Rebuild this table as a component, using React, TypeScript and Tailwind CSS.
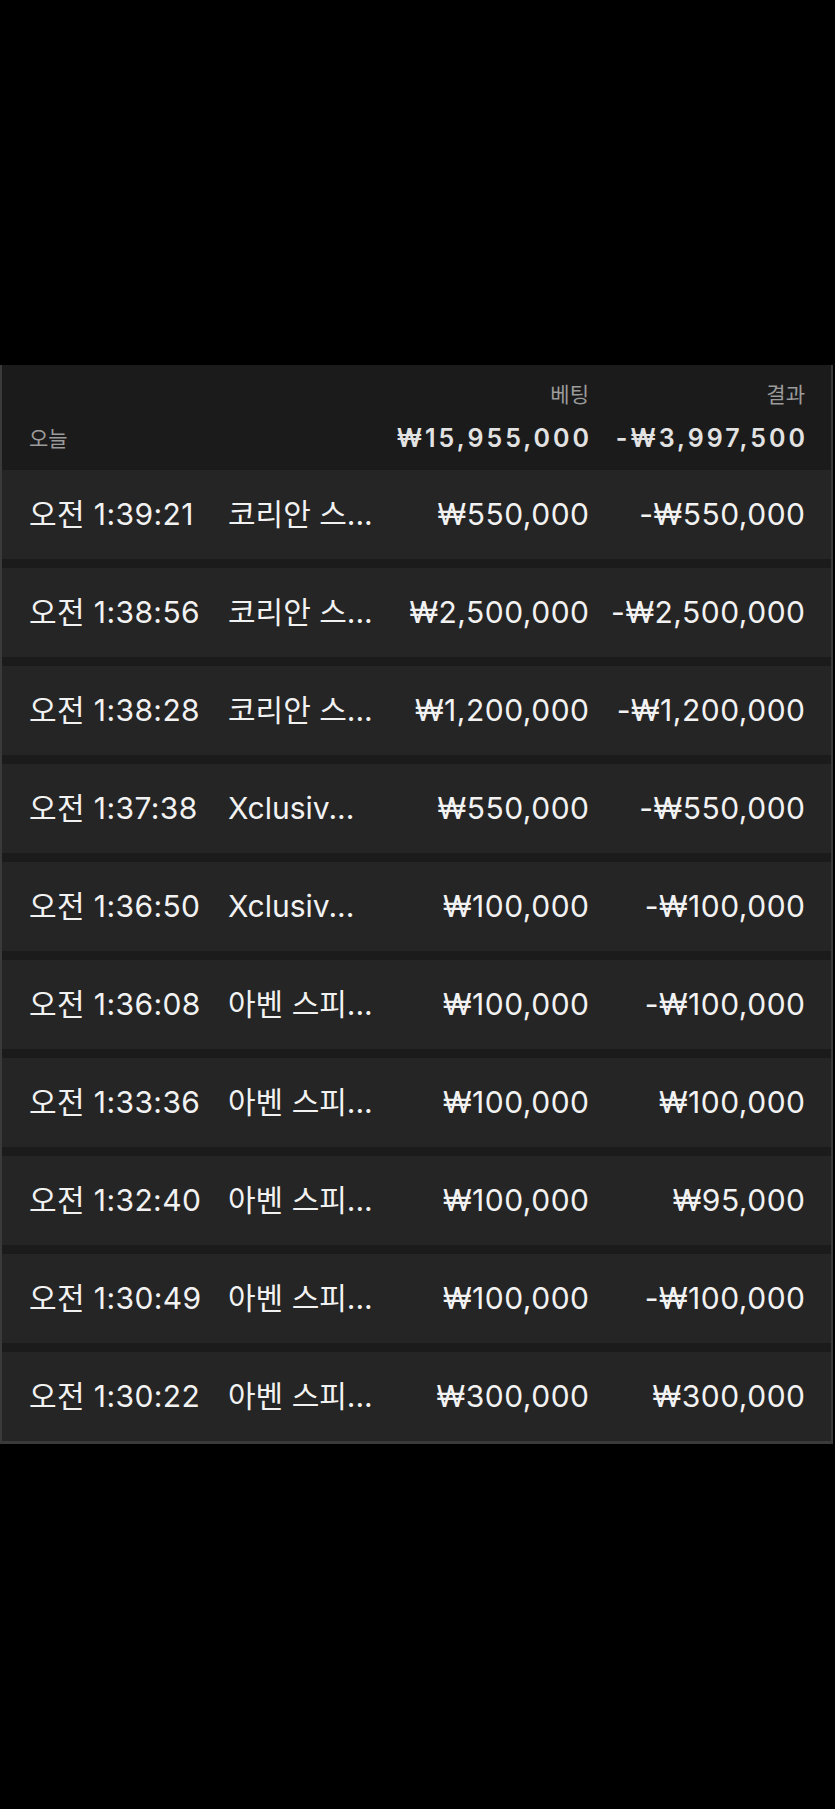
const rows = [
  { time: '오전 1:39:21', game: '코리안 스...', bet: '₩550,000', result: '-₩550,000' },
  { time: '오전 1:38:56', game: '코리안 스...', bet: '₩2,500,000', result: '-₩2,500,000' },
  { time: '오전 1:38:28', game: '코리안 스...', bet: '₩1,200,000', result: '-₩1,200,000' },
  { time: '오전 1:37:38', game: 'Xclusiv...', bet: '₩550,000', result: '-₩550,000' },
  { time: '오전 1:36:50', game: 'Xclusiv...', bet: '₩100,000', result: '-₩100,000' },
  { time: '오전 1:36:08', game: '아벤 스피...', bet: '₩100,000', result: '-₩100,000' },
  { time: '오전 1:33:36', game: '아벤 스피...', bet: '₩100,000', result: '₩100,000' },
  { time: '오전 1:32:40', game: '아벤 스피...', bet: '₩100,000', result: '₩95,000' },
  { time: '오전 1:30:49', game: '아벤 스피...', bet: '₩100,000', result: '-₩100,000' },
  { time: '오전 1:30:22', game: '아벤 스피...', bet: '₩300,000', result: '₩300,000' },
];

const cols = 'grid grid-cols-[200px_150px_210px_216px] pl-[27px]';

export default function App() {
  return (
    <div
      className="min-h-[1809px] w-[835px] bg-black pt-[365px]"
      style={{ fontFamily: 'Inter, "Noto Sans CJK KR", sans-serif' }}
    >
      <div className="w-[833px] border-x-2 border-b-[3px] border-[#3a3a3a] bg-[#1b1b1b]">
        {/* header */}
        <div className={`${cols} h-[105px] content-start pt-[16px]`}>
          <div />
          <div />
          <div className="text-right text-[21px] leading-[28px] text-[#9c9c9c]">베팅</div>
          <div className="text-right text-[21px] leading-[28px] text-[#9c9c9c]">결과</div>
          <div className="col-span-2 self-end pt-[15px] text-[21px] leading-[28px] text-[#9c9c9c]">오늘</div>
          <div className="mr-[-3px] pt-[14px] text-right text-[25px] font-semibold leading-[30px] tracking-[3px] text-[#e2e2e2]">
            ₩15,955,000
          </div>
          <div className="mr-[-3px] pt-[14px] text-right text-[25px] font-semibold leading-[30px] tracking-[3px] text-[#e2e2e2]">
            -₩3,997,500
          </div>
        </div>

        {/* rows */}
        <div className="flex flex-col gap-[9px]">
          {rows.map((r) => (
            <div
              key={r.time}
              className={`${cols} h-[89px] items-center bg-[#252525] text-[30px] text-[#f2f2f2]`}
            >
              <div className="whitespace-nowrap tracking-[0.4px]">{r.time}</div>
              <div className="ml-[-1px] whitespace-nowrap">{r.game}</div>
              <div className="mr-[-0.5px] whitespace-nowrap text-right tracking-[0.5px]">{r.bet}</div>
              <div className="mr-[-0.5px] whitespace-nowrap text-right tracking-[0.5px]">{r.result}</div>
            </div>
          ))}
        </div>
      </div>
    </div>
  );
}
